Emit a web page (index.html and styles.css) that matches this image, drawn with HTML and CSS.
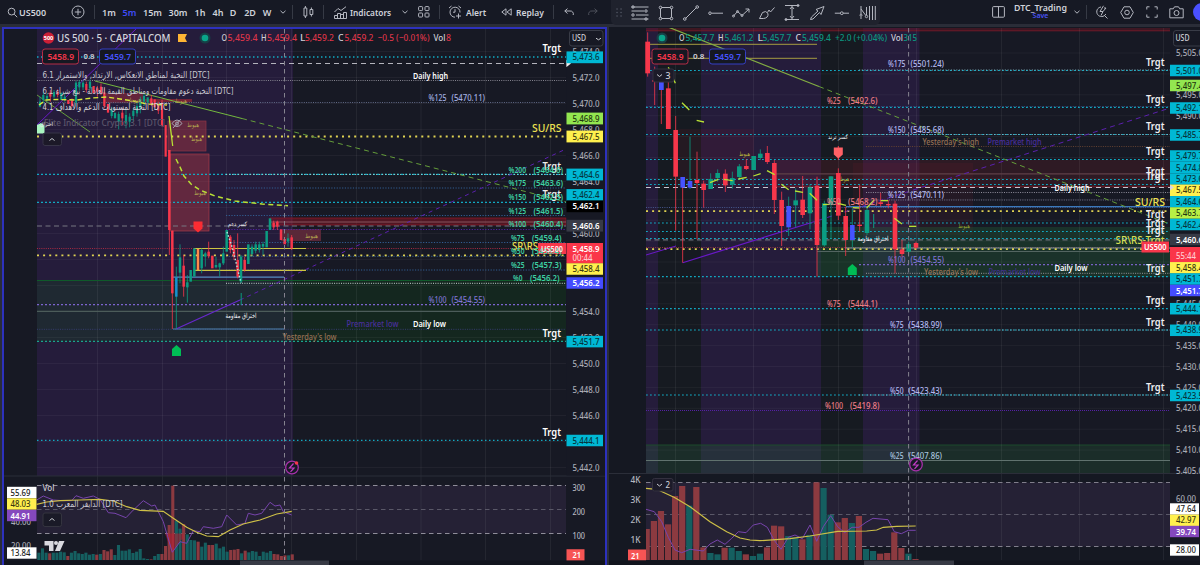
FILE: index.html
```
<!DOCTYPE html>
<html lang="en">
<head>
    <meta charset="UTF-8">
    <meta name="viewport" content="width=device-width, initial-scale=1.0">
    <title>US500</title>
    <link rel="stylesheet" href="styles.css">
</head>
<body>
    <header class="topbar">
        <div class="symbol">
            <svg width="11" height="11" viewBox="0 0 11 11"><circle cx="4.6" cy="4.6" r="3.4"/><path d="M7.2 7.2l3 3"/></svg>
            <b>US500</b>
        </div>
        <div class="cell add"><svg width="14" height="14" viewBox="0 0 14 14"><circle cx="7" cy="7" r="6"/><path d="M7 3.8v6.4M3.8 7h6.4"/></svg></div>
        <i class="sep"></i>
        <nav class="frames">
            <span class="w20">1m</span>
            <span class="w21 active">5m</span>
            <span class="w25">15m</span>
            <span class="w26">30m</span>
            <span class="w18">1h</span>
            <span class="w18">4h</span>
            <span class="w12">D</span>
            <span class="w22">2D</span>
            <span class="w12">W</span>
        </nav>
        <div class="cell w19"><svg width="6" height="4" viewBox="0 0 6 4"><path d="M.5.8L3 3.2 5.5.8"/></svg></div>
        <i class="sep"></i>
        <div class="cell w30"><svg width="11" height="14" viewBox="0 0 11 14"><path d="M1 3h2.8v8H1zM2.4 1v2M2.4 11v2M7 4.5h2.8v5H7zM8.4 2.5v2M8.4 9.5v2"/></svg></div>
        <i class="sep"></i>
        <div class="indicators">
            <svg width="13" height="13" viewBox="0 0 13 13"><path d="M.5 12.5v-3h3v3M3.5 12.5V7.5h3v5M6.5 12.5V8.5h3v4M9.5 12.5v-6h3v6H.5M.5 6l3.5-3.5 3 2L12 .7"/></svg>
            <b>Indicators</b>
        </div>
        <div class="cell w26"><svg width="6" height="4" viewBox="0 0 6 4"><path d="M.5.8L3 3.2 5.5.8"/></svg></div>
        <div class="cell w12"><svg width="12" height="12" viewBox="0 0 12 12"><rect x=".6" y=".6" width="4" height="4" rx=".8"/><rect x="7" y=".6" width="4" height="4" rx=".8"/><rect x=".6" y="7" width="4" height="4" rx=".8"/><rect x="7" y="7" width="4" height="4" rx=".8"/></svg></div>
        <i class="sep wide"></i>
        <div class="alert">
            <svg width="14" height="14" viewBox="0 0 14 14"><path d="M12 7.5A5 5 0 1 0 7 12.2M7 4.2v3H5M1 3l2.5-2M13 3l-2.5-2M10.5 8.5v5M8 11h5"/></svg>
            <b>Alert</b>
        </div>
        <div class="replay">
            <svg width="11" height="8" viewBox="0 0 11 8"><path d="M5 .8L.8 4 5 7.2zM10.2.8L6 4l4.2 3.2z"/></svg>
            <b>Replay</b>
        </div>
        <i class="sep"></i>
        <div class="cell w30"><svg width="10" height="8" viewBox="0 0 10 8"><path d="M3.5.6L.8 3l2.7 2.5M.8 3h5.2a3 3 0 0 1 3.2 4"/></svg></div>
        <div class="cell w18 off"><svg width="10" height="8" viewBox="0 0 10 8"><path d="M6.5.6L9.2 3 6.5 5.5M9.2 3H4A3 3 0 0 0 .8 7"/></svg></div>

        <div class="drawbar">
            <svg class="grip" width="6" height="9" viewBox="0 0 6 9"><path d="M1 1h.1M5 1h.1M1 4.5h.1M5 4.5h.1M1 8h.1M5 8h.1"/></svg>
            <svg width="18" height="16" viewBox="0 0 18 16"><path d="M.5 2h17M.5 6h12.5M5 10h12.5M.5 14h17"/><circle cx="2" cy="2" r="1.2"/><circle cx="15" cy="6" r="1.2"/><circle cx="2" cy="10" r="1.2"/><circle cx="15" cy="14" r="1.2"/></svg>
            <svg width="16" height="16" viewBox="0 0 16 16"><path d="M3.5 2.5h9M3.5 13.5h9M2.5 3.5v9M13.5 3.5v9"/><circle cx="2.5" cy="2.5" r="1.3"/><circle cx="13.5" cy="2.5" r="1.3"/><circle cx="2.5" cy="13.5" r="1.3"/><circle cx="13.5" cy="13.5" r="1.3"/></svg>
            <svg width="16" height="16" viewBox="0 0 16 16"><path d="M2.5 13.5l11-11"/><circle cx="1.8" cy="14" r="1.3"/><circle cx="14.2" cy="2" r="1.3"/></svg>
            <svg width="16" height="16" viewBox="0 0 16 16"><path d="M3.5 8.2H15"/><circle cx="2" cy="8.2" r="1.3"/></svg>
            <svg width="18" height="16" viewBox="0 0 18 16"><path d="M1.5 11L5.5 6.5 10 10.5 17 4M13.5 4H17v3.5"/><circle cx="1.5" cy="11" r="1"/><circle cx="5.5" cy="6.5" r="1"/><circle cx="10" cy="10.5" r="1"/></svg>
            <svg width="16" height="16" viewBox="0 0 16 16"><path d="M.5 13.5L3.5 7.5Q7 5 9 8.5 9.5 13 4.5 13.5zM8.5 7.5L10 5l1.5 2L15.5 2.500"/></svg>
            <svg width="16" height="17" viewBox="0 0 16 17"><path d="M1 1.5h14M1 15.5h14M8 2.5v12M6 5l2-2.5L10 5M6 12l2 2.5 2-2.5"/><circle cx="14" cy="1.5" r="1"/><circle cx="2" cy="15.5" r="1"/></svg>
            <svg width="16" height="16" viewBox="0 0 16 16"><path d="M1.5 14.5l1-2.500L9 6 7 4.500 15 1.500l-3 8L10.500 7.500 4 14z"/></svg>
            <svg width="16" height="16" viewBox="0 0 16 16"><path d="M.8 8.2h5.5M9.2 8.2H15"/><circle cx="7.8" cy="8.2" r="1.4"/></svg>
            <svg width="17" height="16" viewBox="0 0 17 16"><path d="M2 1v8M2 11.500V14M2 4l4.800 6.500M7.500 2v8M10.500 1v14M13.500 1v14M16.300 1v14"/><circle cx="2" cy="10.200" r="1"/><circle cx="7.500" cy="11.500" r="1.200"/></svg>
        </div>

        <div class="right-tools">
            <div class="cell w26"><svg width="13" height="12" viewBox="0 0 13 12"><rect x=".6" y=".6" width="11.8" height="10.6" rx="1"/><path d="M6.5.6v10.6"/></svg></div>
            <div class="layout-name"><strong>DTC_Trading</strong><small>Save</small></div>
            <div class="cell name-arrow"><svg width="6" height="4" viewBox="0 0 6 4"><path d="M.5.8L3 3.2 5.5.8"/></svg></div>
            <i class="sep"></i>
            <div class="cell w29"><svg width="13" height="14" viewBox="0 0 13 14"><path d="M6 2a4.800 4.800 0 1 0 4.800 7M9.500 10.500L12.500 13.500M8.500.8L5 6.500h3L6 10.500M8 6.500l3-3.500H9"/></svg></div>
            <div class="cell w21"><svg width="14" height="13" viewBox="0 0 14 13"><path d="M4 .8h6l3.300 5.700L10 12.200H4L.7 6.500z"/><circle cx="7" cy="6.500" r="2.300"/></svg></div>
            <div class="cell w29"><svg width="12" height="12" viewBox="0 0 12 12"><path d="M.8 3.500V.8h2.700M8.500.8h2.700v2.700M11.200 8.500v2.700H8.500M3.500 11.200H.8V8.500"/></svg></div>
            <div class="cell w21"><svg width="15" height="13" viewBox="0 0 15 13"><path d="M.8 2.800h3.500L5.500.8h4l1.200 2h3.500v9H.8z"/><circle cx="7.500" cy="7" r="2.500"/></svg></div>
            <span class="avatar"></span>
        </div>
    </header>

    <main class="panes">
        <section class="pane left">
            <svg id="chart5m" width="601" height="536" viewBox="4 29 601 536"></svg>
        </section>
        <section class="pane right">
            <svg id="chart1h" width="592" height="537" viewBox="608 28 592 537"></svg>
        </section>
    </main>

    <script src="script.js"></script>
</body>
</html>
```
FILE: styles.css
```
body {
    margin: 0;
    width: 1200px;
    height: 565px;
    overflow: hidden;
    background: #2a2d38;
    font-family: "Noto Sans", "Open Sans", "DejaVu Sans", sans-serif;
    font-size: 9px;
    color: #cfd2da;
}

svg {
    display: block;
    flex: none;
}

.topbar {
    position: relative;
    display: flex;
    align-items: center;
    height: 24px;
    background: #161924;
}

.topbar svg {
    fill: none;
    stroke: #b4b7c0;
    stroke-width: 1;
}

.topbar b {
    font-weight: 600;
}

.symbol, .indicators, .alert, .replay {
    box-sizing: border-box;
    display: flex;
    flex: none;
    align-items: center;
}

.symbol { width: 66px; padding-left: 7px; gap: 1px; }
.indicators { width: 68px; padding-left: 10px; gap: 3px; font-size: 8.3px; }
.alert { width: 48px; padding-left: 8px; gap: 4px; font-size: 8.5px; }
.replay { width: 65px; padding-left: 13px; gap: 4px; font-size: 8.5px; }

.cell, .frames span {
    display: flex;
    flex: none;
    justify-content: center;
    align-items: center;
}

.add { width: 24px; margin-right: 4px; }

.sep {
    flex: none;
    width: 1px;
    height: 14px;
    background: #363a45;
}

.frames {
    display: flex;
    margin-left: 4px;
    font-weight: 600;
}

.sep.wide { margin-left: 9px; }
.active { color: #3f4cf5; }
.off { opacity: .35; }

.w12 { width: 12px; }
.w18 { width: 18px; }
.w19 { width: 19px; }
.w20 { width: 20px; }
.w21 { width: 21px; }
.w22 { width: 22px; }
.w25 { width: 25px; }
.w26 { width: 26px; }
.w29 { width: 29px; }
.w30 { width: 30px; }

/* floating drawing toolbar */
.drawbar {
    position: absolute;
    left: 611px;
    top: 0;
    z-index: 2;
    width: 257px;
    height: 25px;
    padding: 0 4px 0 8px;
    display: flex;
    align-items: center;
    justify-content: space-between;
    background: #1f222d;
    border-radius: 0 0 5px 5px;
}

.drawbar .grip {
    margin-left: -3px;
    stroke: #555966;
    stroke-width: 1.4;
    stroke-linecap: round;
}

.right-tools {
    position: absolute;
    left: 985px;
    top: 0;
    width: 215px;
    height: 24px;
    overflow: hidden;
    display: flex;
    align-items: center;
}

.layout-name {
    display: flex;
    flex: none;
    flex-direction: column;
    align-items: center;
    width: 59px;
    line-height: 8px;
}

.layout-name strong { font-weight: 600; font-size: 8.8px; }
.layout-name small { font-size: 7px; color: #4853f5; font-weight: 600; }
.name-arrow { width: 14px; margin-right: 2px; }

.avatar {
    flex: none;
    width: 18px;
    height: 18px;
    margin-left: 6px;
    border-radius: 50%;
    background: #4a50ff;
}

.panes {
    display: flex;
    gap: 2px;
    padding-top: 3px;
}

.pane { background: #151822; }

.left {
    box-sizing: border-box;
    flex: none;
    width: 605px;
    height: 538px;
    border: solid #2d31bd;
    border-width: 2px 2px 0;
    margin-left: 2px;
    overflow: hidden;
}

.right {
    width: 591px;
    height: 538px;
    overflow: hidden;
    padding-top: 1px;
}

.right svg { margin-left: -1px; }
```
FILE: script.js
```
const NS = "http://www.w3.org/2000/svg";
let svg;

const RED = "#f7374b", GREEN = "#0b9c82", BLUE = "#4653ff";
const CYAN = "#12a9c2", YELLOW = "#e0d352", LIME = "#b9e235";

function add(tag, attrs, text) {
    const el = document.createElementNS(NS, tag);
    for (const k in attrs) el.setAttribute(k, attrs[k]);
    if (text) el.textContent = text;
    svg.appendChild(el);
    return el;
}

function box(x1, y1, x2, y2, fill, extra) {
    add("rect", { x: x1, y: y1, width: x2 - x1, height: y2 - y1, fill: fill, ...extra });
}

function line(x1, y1, x2, y2, stroke, dash, width) {
    const a = { x1, y1, x2, y2, stroke, "stroke-width": width || 1 };
    if (dash) a["stroke-dasharray"] = dash;
    add("line", a);
}

function poly(points, stroke, dash, width) {
    add("polyline", { points: points.join(" "), fill: "none", stroke: stroke, "stroke-width": width || 1, "stroke-dasharray": dash || "none" });
}

// x = left edge, y = vertical middle, w = drawn width
function label(x, y, w, text, fill, size, weight) {
    size = (size || 8) * 1.12;
    add("text", { x: x, y: y + size * 0.35, textLength: w, lengthAdjust: "spacingAndGlyphs", fill: fill, "font-size": size, "font-weight": weight || 500 }, text);
}

function arabic(x, y, w, text, fill, size) {
    add("text", { x: x, y: y + 3, direction: "rtl", "text-anchor": "end", textLength: w, lengthAdjust: "spacingAndGlyphs", fill: fill, "font-size": size || 9, "font-family": "DejaVu Sans, sans-serif" }, text);
}

function tag(x, y, w, h, text, bg, fill, tw) {
    box(x, y - h / 2, x + w, y + h / 2, bg);
    label(x + 6, y, tw || 27, text, fill, 8, fill === "#fff" ? 600 : 500);
}

// rows are [x, bodyTop, bodyBottom, colour, wickTop, wickBottom, wickColour] in thirds of a pixel
function candles(rows, ox, oy, w) {
    const c = { r: RED, g: GREEN, b: BLUE, o: "#ff8a4a", c: "#1792d0" };
    rows.forEach(([x, t, b, k, wt, wb, wk]) => {
        const cx = ox + x / 3;
        if (wt !== undefined) line(cx, oy + wt / 3, cx, oy + wb / 3, c[wk || k], null, 0.8);
        box(cx - w / 2, oy + t / 3, cx + w / 2, oy + b / 3, c[k]);
    });
}

function volume(rows, ox, step, w) {
    rows.forEach(([top, k], i) => {
        const x = ox + i * step;
        box(x, 450 + top / 3, x + w, 560, k === "r" ? "#8c3a40" : "#155f60");
    });
}

function curve(pts, ox, oy) {
    return pts.map(([x, y]) => (ox + x / 3).toFixed(1) + "," + (oy + y / 3).toFixed(1));
}

function quote(x, y, text, colour) {
    box(x, y, x + 36, y + 15, "#151822", { rx: 2.5, stroke: colour });
    label(x + 5, y + 7.7, 26.5, text, colour === "#343fc4" ? "#4653ff" : RED, 8, 600);
}

function bolt(x, y) {
    add("circle", { cx: x, cy: y, r: 6.3, fill: "#171925", stroke: "#a530a8", "stroke-width": 1.3 });
    add("path", { d: `M${x + 1.5} ${y - 4}l-4 4.5h4.5l-3.5 3.8`, fill: "none", stroke: "#c13cc5", "stroke-width": 1.2 });
}

function chevron(x, y, dir) {
    add("path", { d: `M${x - 2.5} ${y + dir}l2.5 ${-2 * dir}l2.5 ${2 * dir}`, fill: "none", stroke: "#c8cad0" });
}

function pin(x, y, fill, dir) {
    add("path", { d: `M${x - 4.5} ${y - 5 * dir}h9v${7 * dir}l-4.5 ${4 * dir}l-4.5 ${-4 * dir}z`, fill: fill });
}

/* ---------- left chart ---------- */
svg = document.getElementById("chart5m");

box(4, 29, 606, 565, "#171924");
box(37, 29, 293, 476, "#251c3b");
box(37, 280.5, 293, 341.5, "#1f2932");
box(293, 280.5, 566, 341.5, "#14271f");
box(4, 476, 606, 565, "#171924");
box(37, 485.5, 566, 533.5, "#252135");
for (let y = 51.5; y < 470; y += 26) line(37, y, 566, y, "rgba(255,255,255,.045)");
[97.5, 162.5, 226.5, 291.5, 356.5, 421, 485.5, 550.5].forEach(x => line(x, 29, x, 560, "rgba(255,255,255,.06)"));
line(4, 476, 605, 476, "#2b2e39");
line(37, 280.5, 566, 280.5, "#0f5a2a");

box(105, 93, 143, 103, "rgba(195,50,60,.4)");
box(145, 99, 192, 102, "rgba(195,40,50,.5)");
box(168, 121, 206, 151, "rgba(190,60,70,.4)", { stroke: "#8f3545", "stroke-width": .7 });
box(170, 154, 209, 231, "rgba(190,60,70,.4)", { stroke: "#a93a48", "stroke-width": .7 });
box(270, 218, 566, 225, "rgba(150,20,35,.45)", { stroke: "#8c1824", "stroke-width": .8 });
line(270, 222, 566, 222, "#85525c");
box(281, 229, 321, 241, "#592838");

line(37, 57, 566, 57, CYAN, "1.5 2.5", 1.3);
line(37, 63.5, 566, 63.5, "#b4b4bd", "5 4");
add("path", { d: "M566.5 60l4.5 3.5l-4.5 3.5z", fill: "#eee" });
line(37, 80.5, 566, 80.5, "#85848f", "1 1.2", 1.2);
line(37, 102.5, 566, 102.5, "#626b88", "1 1.3", 1.2);
line(37, 136.5, 566, 136.5, YELLOW, "2 4.1", 1.8);
line(37, 174.4, 566, 174.4, CYAN, "2 2", 1.2);
line(226, 174.4, 566, 174.4, "#8fd5d2", "1.2 1.8", 1);
[188, 215.5, 242.5, 256.3, 270].forEach(y => line(226, y, 566, y, "#315d91", "1.2 1.5"));
line(37, 202.3, 566, 202.3, CYAN, "2 2", 1.2);
line(37, 226, 566, 226, "#777681", "5 3.5", 1.2);
line(226, 229.5, 566, 229.5, "#5224a0", "1.2 1.5");
line(37, 248.5, 566, 248.5, "#a62b42", "1 1.2");
line(37, 255.3, 566, 255.3, YELLOW, "2 4.1", 1.8);
line(226, 283.3, 566, 283.3, "#a4b1ae", "1 1.3", 1.2);
line(37, 304.7, 566, 304.7, "#7c64cf", "2 2", 1.3);
line(37, 311.3, 566, 311.3, "#4c5c5a", null, 1.2);
line(37, 329.3, 566, 329.3, "#363d70", "1 1.3");
line(37, 341.3, 566, 341.3, "#1aa48d", "2 2", 1.2);
line(37, 440.3, 566, 440.3, CYAN, "1.5 2.5", 1.3);
[485.5, 509.5, 533.5].forEach((y, i) => line(37, y, 566, y, i === 1 ? "#5a5868" : "#8f8d99", "4.5 3.5"));
line(173, 277.2, 284, 277.2, "#568bc2", null, 1.2);
line(173, 329, 284, 329, "#4f82af", null, 1.2);

// trend lines
line(95, 81, 242, 118.5, "#73b83e");
line(242, 118.5, 566, 202, "#659e3a", "5 4");
line(37, 95, 90, 132, "#659e3a");
line(37, 125, 137, 28, "#6918c8");
line(176, 329, 240, 300, "#6728cc", null, 1.3);
line(240, 300, 566, 149, "#5b20ae", "4 4");
line(194, 248.5, 306, 248.5, "#cdc542", null, 1.2);
line(194, 270.3, 306, 270.3, "#cdc542", null, 1.2);

candles([
    [120,305,320,"g",290,322],[130,285,300,"g",275,310],[141,288,296,"g",280,305],[151,278,290,"r",270,305],[162,276,290,"g",270,296],[173,275,285,"r",268,292],
    [184,278,300,"g"],[194,290,298,"g",280,305],[205,300,312,"r"],[216,302,318,"r",295,322],[228,248,308,"g",243,320],[238,246,262,"g",240,272],[249,248,262,"g",241,270],
    [259,252,270,"r",245,278],[270,245,265,"g",238,272],[281,258,280,"r"],[292,265,275,"r",258,290],[303,260,280,"r",250,285],[313,277,318,"r",265,325],[324,312,338,"r"],
    [335,328,348,"g",320,355],[345,338,355,"g"],[356,342,365,"g",335,388],[367,338,355,"r",325,375],[378,345,370,"g",330,385],[389,350,365,"g",340,382],[400,332,348,"g",325,365],
    [411,318,340,"g",308,350],[421,297,325,"g",290,340],[432,288,305,"g",280,318],[443,292,308,"g"],[454,295,312,"r",285,318],[464,298,322,"r"],[475,312,332,"r",305,342],[486,308,378,"r",300,380],[497,375,470,"r"]
], 0, 0, 2.2);
candles([
    [508,0,240,"r",0,315],[517,242,430,"r",242,537],[529,382,440,"c",350,537,"g"],[540,322,368,"g",283,400],[551,347,410,"r",315,440],[562,397,412,"g",375,458],[572,360,395,"g"],[583,295,380,"g"],
    [594,297,360,"o"],[605,300,355,"g",295,370],[616,310,320,"g",305,350],[626,305,318,"r",275,325],[637,317,355,"r"],[648,345,352,"g",320,355],[659,340,352,"g",338,380],[670,310,340,"g",290,345],[680,240,305,"g"],
    [691,260,300,"r",255,310],[702,285,320,"r",270,330],[713,330,380,"r",250,385],[723,320,395,"g",315,400],[734,330,360,"r",320,365],[745,283,342,"g"],[756,290,312,"g",283,320],[767,283,302,"g",275,310],
    [778,283,300,"g",275,308],[789,282,290,"g",275,315],[800,243,292,"g"],[810,205,240,"g"],[821,218,232,"r",212,240],[832,215,230,"r",212,240],[843,238,270,"r"],[854,267,283,"r"],[864,265,275,"g",250,290],[875,262,295,"r",255,300]
], 0, 150, 2.5);
line(241.2, 293, 241.2, 305, GREEN);
poly(["227,232", "233,250", "241,283"], "#b5ebe0", "1.5 2", 1.4);
poly(["39,105", "46,100", "57,99.5", "77,100", "92,98", "107,97", "120,99", "133,101", "147,104", "167,105"], "#d7e83c", "5 3", 1.4);
line(169, 116, 172.7, 146, LIME, null, 1.3);
poly(["176,159", "180,167", "184,176", "191,184", "200,190", "215,196", "235,201", "262,204", "288,205.7"], LIME, "5 3.5", 1.5);

volume([[308,"g"],[295,"g"],[308,"g"],[310,"r"],[308,"g"],[308,"g"],[305,"g"],[307,"g"],[318,"r"],[308,"g"],[303,"g"],[310,"g"],[312,"g"],[308,"g"],[314,"g"],[312,"g"],[314,"r"],[312,"g"],
    [300,"r"],[304,"r"],[298,"r"],[315,"g"],[285,"g"],[302,"g"],[302,"g"],[298,"g"],[309,"g"],[305,"g"],[297,"g"],[325,"g"],[327,"g"],[328,"r"],[318,"g"],[312,"g"],[312,"r"],[288,"r"],[225,"r"],[107,"r"],
    [213,"g"],[236,"g"],[222,"r"],[253,"g"],[270,"g"],[271,"g"],[275,"r"],[290,"g"],[278,"g"],[285,"r"],[285,"r"],[281,"g"],[295,"g"],[290,"g"],[305,"g"],[300,"r"],[299,"r"],[297,"r"],[310,"g"],
    [302,"r"],[307,"g"],[303,"g"],[305,"g"],[318,"g"],[305,"g"],[308,"g"],[303,"g"],[312,"r"],[313,"r"],[318,"r"],[316,"r"],[316,"g"],[313,"r"]], 37.3, 3.62, 3.1);
add("path", { d: "M165 533.5L172 553l8-12 3.5-2.5V533.5z", fill: "rgba(190,30,50,.55)" });
poly(curve([[110,150],[130,138],[160,150],[190,152],[215,152],[228,137],[250,145],[280,138],[300,148],[325,188],[345,190],[378,203],[400,180],[430,152],[455,168],[465,165],[490,215],[503,260],[517,307],[540,275],[560,280],[580,242],[600,245],[610,230],[640,235],[665,230],[680,195],[710,225],[735,220],[745,190],[765,195],[785,190],[810,157],[825,168],[840,165],[850,185],[875,195]], 0, 450), "#7744ac");
poly(curve([[110,163],[140,156],[180,152],[240,150],[300,148],[340,153],[380,170],[420,181],[490,184],[520,205],[560,232],[590,247],[620,258],[655,260],[690,240],[730,222],[780,210],[830,192],[875,184]], 0, 450), "#cec047", null, 1.2);
line(284.5, 29, 284.5, 560, "#85838f", "4.5 3.5");

// legend
add("circle", { cx: 48.5, cy: 38, r: 5.8, fill: "#cc1f36" });
label(43.7, 38, 9.6, "500", "#fff", 4.8, 700);
label(57, 37.8, 113.5, "US 500 · 5 · CAPITALCOM", "#d4d5dc", 9.6, 500);
add("path", { d: "M178 34h9l-2 4l2 4h-9z", fill: "#ffb534" });
add("circle", { cx: 205, cy: 38, r: 5.5, fill: "#173f46" });
add("circle", { cx: 205, cy: 38, r: 3.3, fill: "#0aa58a" });
[["O", 221.5, "5,459.4", 227.5, 30], ["H", 261, "5,459.4", 267, 30], ["L", 300, "5,459.2", 305, 29], ["C", 338, "5,459.2", 344.5, 29]].forEach(([k, x, v, vx, w]) => {
    label(x, 38, 5.5, k, "#cfd0d8", 8);
    label(vx, 38, w, v, "#dc3549", 8);
});
label(377.5, 38, 52, "−0.5 (−0.01%)", "#dc3549", 8);
label(433.5, 38, 12, "Vol", "#cfd0d8", 8);
label(446, 38, 5, "8", "#dc3549", 8);
quote(42.5, 49, "5458.9", "#b62d46");
quote(99.5, 49, "5459.7", "#343fc4");
label(83.5, 56.5, 11, "0.8", "#d0d0d8", 7, 600);
arabic(42.5, 75, 167, "[DTC] النخبة لمناطق الانعكاس, الارتداد, والاستمرار 6.1", "#c9c8d1");
arabic(42.5, 91, 191, "[DTC] النخبة دعوم مقاومات ومناطق القيمة العادلة - بيع شراء 6.1", "#c9c8d1");
arabic(42.5, 107, 128, "[DTC] النخبة لمستويات الدعم والاهداف 4.1", "#d5d4db");
label(44, 123, 121, "Elite Indicator Crypto 3.1 [DTC]", "#5c566b", 8);
add("path", { d: "M172 123.5q5-7 10 0q-5 6-10 0zM173 128l8-9", fill: "none", stroke: "#aaa6b4" });
add("circle", { cx: 177, cy: 123.5, r: 1.5, fill: "none", stroke: "#aaa6b4" });
add("path", { d: "M37 125l4-2l3.5 3v7.5h-7.5z", fill: "#a9f5c0" });
arabic(40, 123, 13, "اختراق", "#eee", 5.5);
box(43, 133, 61.5, 145.5, "#1c1928", { rx: 2, stroke: "#373447" });
chevron(52, 139.5, 1);

// notes drawn on the price area
[[129, 98.5, 12], [175, 99.5, 12], [187, 123.5, 12], [191, 138, 11], [194, 192, 12], [305, 235, 13]].forEach(([x, y, w]) => arabic(x, y, w, "هبوط", "#b4a74f", 6));
arabic(228, 223, 19, "كسر دعم", "#f0f0f4", 6);
arabic(225.5, 315, 31, "اختراق مقاومة", "#f0f0f4", 7);
pin(198, 226.5, "#fb2c32", 1);
pin(176.5, 351, "#00bd55", -1);
[[48.5, "#fff"], [166, "#eee"], [194.5, "#eee"], [333, "#fff"], [432, "#fff"]].forEach(([y, c]) => label(542.5, y, 18.5, "Trgt", c, 9.2, 600));
label(413, 76, 35, "Daily high", "#fff", 8, 600);
label(413, 324, 33, "Daily low", "#fff", 8, 600);
label(346.5, 324, 52, "Premarket low", "#4a2f9d", 8);
label(282.5, 337, 54, "Yesterday's low", "#967154", 8);
label(428.5, 98, 18, "%125", "#a3afe0", 8);
label(451.5, 98, 33.5, "(5470.11)", "#a3afe0", 8);
label(428.5, 300, 18, "%100", "#7f73d3", 8);
label(451.5, 300, 33.5, "(5454.55)", "#7f73d3", 8);
label(532, 128, 29.5, "SU/RS", "#eee252", 9.5, 500);
label(512, 246.5, 26, "SR\\RS", "#eee252", 9.5, 500);
box(538, 243, 566, 254, "#f7374b");
[["%200", 169.5, 508.5, "(5464.6)", 533.5], ["%175", 183, 508.5, "(5463.6)", 533.5], ["%150", 196.8, 508.5, "(5462.5)", 533.5], ["%125", 210.4, 508.5, "(5461.5)", 533.5], ["%100", 224, 508.5, "(5460.4)", 533.5],
    ["%75", 237.5, 511, "(5459.4)", 532], ["%50", 251, 511, "(5458.4)", 532], ["%25", 265, 511, "(5457.3)", 532], ["%0", 278, 513, "(5456.2)", 530]].forEach(([a, y, x, b, bx]) => {
    label(x, y, a.length > 3 ? 17.5 : a.length > 2 ? 13.5 : 9.5, a, "#3ecfa2", 8, 600);
    label(bx, y, 29.5, b, "#3ecfa2", 8, 600);
});
label(541, 248.5, 22, "US500", "#ffe9ec", 8, 600);
bolt(292, 467.5);
add("circle", { cx: 296.5, cy: 463, r: 1.8, fill: "#f7374b" });

// price scale
box(566.5, 29, 605, 475.5, "#171924");
[5474, 5472, 5470, 5468, 5466, 5464, 5460, 5454, 5452, 5450, 5448, 5446, 5442].forEach(p => {
    label(572.5, 77.5 + (5472 - p) * 13, 27, p.toLocaleString("en-US") + ".0", "#a9abb5", 8);
});
add("path", { d: "M566.5 60l4.5 3.5l-4.5 3.5z", fill: "#eee" });
box(569.5, 30.5, 603, 46, "#171924", { rx: 2.5, stroke: "#393c47" });
label(572, 38.5, 14, "USD", "#d2d4da", 7.5);
chevron(598.5, 39, -.8);
[[57.3, "5,473.6", "#00b8d4", "#06343c"], [118.5, "5,468.9", "#93e650", "#22360f"], [136.5, "5,467.5", "#fff04e", "#3a370f"], [174.5, "5,464.6", "#00b8d4", "#06343c"], [195, "5,462.4", "#00b8d4", "#06343c"],
    [206.3, "5,462.1", "#000", "#fff"], [225.7, "5,460.6", "#373a46", "#fff"]].forEach(([y, t, bg, c]) => tag(566.5, y, 36.5, 11.8, t, bg, c));
box(566.5, 243, 603, 263.5, "#fa3549");
label(572.5, 248.5, 27, "5,458.9", "#fff", 8, 600);
label(572.5, 257.5, 20, "00:44", "#ffc9cf", 8);
[[269, "5,458.4", "#fff04e", "#3a370f"], [283, "5,456.2", "#454cff", "#fff"], [341.6, "5,451.7", "#00b8d4", "#06343c"], [440.5, "5,444.1", "#00b8d4", "#06343c"]].forEach(([y, t, bg, c]) => tag(566.5, y, 36.5, 11.5, t, bg, c));
[["300", 487.5], ["200", 511.5], ["100", 535.5]].forEach(([t, y]) => label(572.5, y, 12.5, t, "#b5b7c0", 8));
tag(566.5, 555, 18, 11.5, "21", "#f75454", "#fff", 8.5);

// indicator pane legend and its left scale
label(42.5, 487.5, 12, "Vol", "#c9cad2", 8);
arabic(42.5, 503.5, 80, "[DTC] الدايفر المعرب 1.0", "#c9c8d1");
box(43, 513, 61.5, 526.5, "#1a1a27", { rx: 2, stroke: "#34343f" });
chevron(52, 519.5, 1);
add("path", { d: "M44.500 541h9v10h-4.500v-5.500h-4.500zM59 541h5.500l-4.500 10h-5z", fill: "#d9dae0" });
add("circle", { cx: 56, cy: 543, r: 2, fill: "#d9dae0" });
label(11, 521.5, 20, "40.00", "#a9abb5", 8);
label(11, 545.5, 20, "20.00", "#a9abb5", 8);
[[492.5, "55.69", "#fff", "#222"], [504, "48.03", "#fff04e", "#3a370f"], [515.5, "44.91", "#8548bd", "#fff"], [553, "13.84", "#fff", "#222"]].forEach(([y, t, bg, c]) => {
    box(7, y - 5.7, 36.5, y + 5.7, bg);
    label(10.5, y, 20, t, c, 8, c === "#fff" ? 600 : 500);
});
box(4, 560.5, 606, 565, "#11141d");
box(240, 560.5, 329, 565, "#373a45");

/* ---------- right chart ---------- */
svg = document.getElementById("chart1h");

box(608, 28, 1200, 565, "#151822");
box(646, 28, 1170, 473, "#171924");
box(646, 28, 658, 473, "#251c3b");
box(658, 28, 701, 473, "#161a21");
box(701, 28, 821, 473, "#251c3b");
box(821, 28, 863, 473, "#161a21");
box(863, 28, 919.5, 473, "#251c3b");
box(646, 28, 1170, 31, "rgba(120,20,35,.4)");
line(646, 30.8, 1170, 30.8, "#6d1a28");
box(676, 129, 754, 187, "rgba(120,30,40,.15)");
box(775, 160, 1170, 187, "rgba(140,30,40,.2)");
box(853, 163, 973, 235, "rgba(120,30,45,.13)");
box(817, 227, 1170, 277, "rgba(32,110,55,.3)");
box(646, 445, 1170, 473, "#1b2d29");
[[646, 658], [701, 821], [863, 919.5]].forEach(([a, b]) => box(a, 445, b, 473, "#26303b"));
line(646, 445, 1170, 445, "#1d4a2d");
box(646, 482.5, 1170, 546.5, "#252135");
for (let y = 53; y < 470; y += 20.9) line(646, y, 1170, y, "rgba(255,255,255,.045)");
[675.5, 753.5, 838.5, 916.5, 1001.5, 1079.5, 1163.5].forEach(x => line(x, 28, x, 560, "rgba(255,255,255,.06)"));
line(608, 473.5, 1200, 473.5, "#2b2e39");

[70.5, 107.3, 134.5, 159.5, 179.5, 184.5, 223, 231.5, 238.5, 276.7, 308.7, 330, 395].forEach(y => line(646, y, 1170, y, CYAN, "1.8 2.2", 1.2));
[70, 134.5, 330, 395].forEach(y => line(859, y, 1170, y, "#8bbecb", "1.2 1.5", .8));
line(646, 106.5, 1170, 106.5, "#3a4f87", "1.2 1.5", .8);
line(866, 146.5, 1170, 146.5, "#644231", "1 1.3");
line(775, 173.8, 1170, 173.8, "#5f4149", null, 1.2);
line(775, 186.8, 1170, 186.8, "#76222d");
line(646, 187.5, 1170, 187.5, "#c7c5ce", "5 4");
line(866, 192.5, 1170, 192.5, "#8f8d9b", "1 1.3");
line(866, 200, 1170, 200, "#73728b", "1 1.3");
line(646, 207.5, 1170, 207.5, "#46588e", "1 1.3");
line(846, 206.7, 1170, 206.7, "#3b79bb", null, 1.2);
line(646, 211.2, 1170, 211.2, YELLOW, "2 4.1", 1.8);
line(646, 239.8, 1170, 239.8, "#6d6e78", "5 3.5", 1.2);
line(646, 247.5, 1170, 247.5, "#963245", "1 1.3");
line(845, 248, 1170, 248, "#7d99a2", null, 1.2);
line(646, 249.2, 1170, 249.2, YELLOW, "2 4.1", 1.8);
line(817, 251.5, 1170, 251.5, "#536561");
line(859, 264.7, 1170, 264.7, "#7761c4", "2 2", 1.2);
line(866, 273.3, 1170, 273.3, "#9a969c", "1 1.3");
line(646, 410.5, 1170, 410.5, "#5420a5", "1 1", 1);
line(646, 460.5, 1170, 460.5, "#60726e", null, 1.2);
[482.5, 514.5, 546.5].forEach((y, i) => line(646, y, 1170, y, i === 1 ? "#5a5868" : "#807e8b", "4.5 3.5"));
line(646, 44.3, 817, 44.3, "#a69d42");
line(646, 58.3, 817, 58.3, "#a69d42");
line(668, 27, 819, 86.5, "#83ae42", null, 1.2);
line(819, 86.5, 1167, 223, "#659e3a", "5 4");
line(646, 255, 676, 246, "#6918c8");
line(682.7, 262.7, 810, 223, "#6918c8", null, 1.2);
line(810, 223, 1170, 108, "#5b20ae", "5 4");

candles([[143,125,220,"r",97,230],[164,240,245,"r",200,315],[184,245,270,"b",245,372,"r"],[205,265,387,"r",245,387]], 600, 0, 4.8);
candles([
    [107,-30,110,"r",-72,272],[128,111,143,"b",111,368,"r"],[150,123,143,"b",-10,147,"g"],[171,120,129,"r",35,298],[191,131,150,"r",122,203],[212,117,147,"g",100,147],[233,99,114,"g",88,125],[256,101,136,"r",88,156],
    [277,114,134,"g",95,146],[298,79,111,"g",72,115],[319,78,87,"r",57,90],[341,48,90,"g"],[361,41,54,"g",28,60],[382,39,66,"r",18,72],[403,69,180,"r",60,222],[425,180,258,"r",155,318],[446,198,262,"b",170,288,"g"],
    [467,181,196,"g",145,262],[488,179,225,"r",108,234],[510,142,220,"g",133,268],[531,137,315,"r",110,410],[553,190,316,"g",182,320],[573,109,195,"g",108,298],[595,99,227,"r",85,240],[617,228,300,"r",200,348],
    [637,255,300,"b",205,322,"g"],[659,254,258,"r",135,275],[681,210,279,"g",200,285],[722,187,192,"r",158,200],[745,192,196,"r",180,205],[765,191,328,"r",182,400],[786,328,342,"r",300,352],[806,312,335,"g",305,340],[828,309,323,"r",305,328]
], 640, 140, 4.6);
line(873.7, 214, 873.7, 228, GREEN);
// moving stop, one dash every other bar
[[85,-218,106,-170],[126,-112,148,-90],[170,-59,192,-54],[210,128,235,118],[252,118,278,122],[295,117,320,112],[340,108,362,101],[381,92,404,104],[424,133,446,149],[465,153,489,157],[509,160,531,181],[549,194,568,193],[594,190,618,196],[638,203,658,204],[680,204,702,180],[722,182,744,182],[763,235,786,252],[807,259,829,259]].forEach(([a, b, c, d]) => {
    line(640 + a / 3, 140 + b / 3, 640 + c / 3, 140 + d / 3, LIME, null, 1.3);
});
volume([[237,"r"]], 646, 0, 3.8);
volume([[213,"r"],[183,"r"],[223,"r"],[138,"r"],[108,"r"],[167,"g"],[111,"r"],[292,"r"],[309,"g"],[313,"g"],[293,"r"],[293,"g"],[303,"g"],[313,"r"],[318,"g"],[311,"g"],[292,"r"],[227,"r"],[229,"r"],[258,"g"],[262,"g"],[268,"r"],[255,"g"],
    [97,"r"],[114,"g"],[194,"g"],[217,"r"],[204,"r"],[219,"g"],[198,"r"],[297,"g"],[303,"g"],[311,"r"],[309,"r"],[247,"r"],[294,"r"],[311,"g"],[327,"r"]], 650.8, 7.07, 6.2);
poly(curve([[108,178],[133,185],[155,215],[175,262],[195,300],[215,308],[240,298],[280,303],[300,282],[322,270],[345,283],[365,265],[385,245],[408,248],[430,225],[452,220],[472,232],[492,270],[513,298],[535,262],[555,255],[577,266],[600,225],[620,274],[640,230],[662,197],[683,230],[704,248],[726,232],[747,232],[768,217],[789,205],[834,209],[853,245],[874,251],[895,241],[917,241]], 610, 450), "#7744ac");
poly(curve([[108,115],[140,118],[195,143],[240,170],[300,215],[350,245],[390,264],[420,270],[450,272],[540,266],[600,258],[683,244],[770,243],[800,240],[820,232],[860,229],[917,228]], 610, 450), "#cec047", null, 1.2);
line(908.6, 28, 908.6, 560, "#85838f", "4.5 3.5");

add("circle", { cx: 662, cy: 38, r: 5.5, fill: "#173f46" });
add("circle", { cx: 662, cy: 38, r: 3.3, fill: "#0aa58a" });
[["O", 679, "5,457.7", 685.5, 29], ["H", 718, "5,461.2", 724.5, 29], ["L", 757.5, "5,457.7", 762.5, 29], ["C", 795.5, "5,459.4", 802, 29]].forEach(([k, x, v, vx, w]) => {
    label(x, 38, 5.5, k, "#cfd0d8", 8);
    label(vx, 38, w, v, "#0c9680", 8);
});
label(835, 38, 52, "+2.0 (+0.04%)", "#0c9680", 8);
label(891, 38, 12, "Vol", "#cfd0d8", 8);
label(903.5, 38, 13.5, "315", "#0c9680", 8);
quote(652, 49, "5458.9", "#b62d46");
quote(709.5, 49, "5459.7", "#343fc4");
label(693, 56.5, 11.5, "0.8", "#d0d0d8", 7, 600);
box(653, 69, 674, 82, "#1c1b29", { rx: 2, stroke: "#33313f" });
chevron(659.5, 75.5, -1);
label(665.5, 75.5, 5, "3", "#cfd0d8", 8);

const violet = "#b3b9ef";
[["%175", 888, "(5501.24)", 910.5, 64, violet], ["%150", 888, "(5485.68)", 910.5, 129.5, violet], ["%125", 888, "(5470.11)", 910.5, 195, violet], ["%100", 888, "(5454.55)", 910.5, 260, "#7f73d3"],
    ["%75", 890, "(5438.99)", 908.5, 325, violet], ["%50", 890, "(5423.43)", 908.5, 390.5, violet], ["%25", 890, "(5407.86)", 908.5, 456, "#a9c3dd"]].forEach(([a, x, b, bx, y, c]) => {
    label(x, y, a.length > 3 ? 17.5 : 13.5, a, c, 8);
    label(bx, y, 33.5, b, c, 8);
});
[["%25", 827, "(5492.6)", 848, 100.5], ["%50", 827, "(5468.2)", 848, 202], ["%75", 827, "(5444.1)", 848, 304], ["%100", 825, "(5419.8)", 850, 406]].forEach(([a, x, b, bx, y]) => {
    label(x, y, a.length > 3 ? 18 : 13.5, a, "#ee7e86", 8);
    label(bx, y, 29.5, b, "#ee7e86", 8);
});
label(922.5, 141.5, 56.5, "Yesterday's high", "#967154", 8);
label(987.5, 141.5, 54, "Premarket high", "#4a2f9d", 8);
label(924, 272, 54, "Yesterday's low", "#967154", 8);
label(988.5, 272, 52, "Premarket low", "#43308f", 8);
label(1054.5, 187.5, 35, "Daily high", "#fff", 8, 600);
label(1054.5, 268, 33, "Daily low", "#fff", 8, 600);
arabic(739, 153, 11, "هبوط", "#bdbd3c", 6);
arabic(840, 178, 9, "هبوط", "#bdbd3c", 6);
arabic(958, 225, 12, "هبوط", "#8fa32f", 6);
arabic(828, 136, 20, "كسر ترند", "#f0f0f4", 6);
arabic(857.5, 237.5, 31, "اختراق مقاومة", "#f0f0f4", 7);
line(838.3, 146, 838.3, 160, RED);
pin(838.3, 152.5, "#ff6166", 1);
pin(852.3, 270, "#00bd55", -1);
label(1135, 202, 30, "SU/RS", "#eee252", 9.5, 500);
label(1115.5, 240, 49, "SR\\RS-Trgt", "#d6df55", 9.5, 500);
[62, 99, 126, 151.5, 171, 176, 214, 223, 230, 268, 300, 322, 387].forEach(y => label(1146, y, 18.5, "Trgt", "#f0f0f2", 9.2, 600));
box(1141.5, 241.5, 1169, 252.5, "#f7374b");
label(1144, 247.2, 22.5, "US500", "#fff", 8, 600);
bolt(916, 464.5);

box(1170, 31, 1200, 473, "#171924");
[5505, 5495, 5490, 5445, 5440, 5435, 5430, 5425, 5420, 5415, 5410, 5405].forEach(p => {
    label(1176, 53 + (5505 - p) * 4.18, 27, p.toLocaleString("en-US") + ".0", "#a9abb5", 8);
});
box(1170, 474, 1200, 565, "#171924");
box(1173.5, 30.5, 1206, 46, "#171924", { rx: 2.5, stroke: "#393c47" });
label(1175.5, 38.5, 14, "USD", "#d2d4da", 7.5);

function priceTag(y, t, k) {
    const bg = { c: "#00b8d4", g: "#93e650", l: "#b8ef45", y: "#fff04e", d: "#373a46", b: "#454cff" }[k];
    const fg = { c: "#06343c", g: "#22360f", l: "#22360f", y: "#3a370f", d: "#fff", b: "#fff" }[k];
    tag(1170, y, 30, 11.5, t, bg, fg);
}

[[70.5, "5,501.0", "c"], [85.5, "5,497.4", "g"], [108, "5,492.1", "c"], [135, "5,485.7", "c"], [156, "5,479.7", "c"], [167.5, "5,474.8", "c"], [179, "5,473.6", "c"], [190.3, "5,467.5", "y"], [201.8, "5,464.6", "c"],
    [213, "5,463.7", "l"], [224.5, "5,462.4", "c"], [239.5, "5,460.6", "d"]].forEach(([y, t, k]) => priceTag(y, t, k));
box(1170, 247, 1200, 262.5, "#fa3549");
label(1176, 256.3, 20, "55:44", "#ffc9cf", 8);
[[267.8, "5,458.4", "y"], [279, "5,451.7", "c"], [290.5, "5,451.7", "b"], [308.7, "5,444.1", "c"], [330.3, "5,438.9", "c"], [395.5, "5,423.5", "c"]].forEach(([y, t, k]) => priceTag(y, t, k));
add("path", { d: "M1170 184.5l4 3l-4 3z", fill: "#d5d5dc" });

[["4K", 480], ["3K", 499.5], ["2K", 519.5], ["1K", 539.5]].forEach(([t, y]) => label(630.5, y, 10, t, "#b5b7c0", 8));
box(628, 549.5, 646, 560.5, "#f75454");
label(631, 555.5, 8.5, "21", "#fff", 8, 600);
box(652.5, 478.5, 673, 491, "#1c1b29", { rx: 2, stroke: "#33313f" });
chevron(659.5, 485, -1);
label(665.5, 485, 4.5, "2", "#cfd0d8", 8);
label(1176, 498.5, 20, "60.00", "#a9abb5", 8);
[[509, "47.64", "#fff", "#222"], [520.3, "42.97", "#fff04e", "#3a370f"], [531.5, "39.74", "#8548bd", "#fff"], [550, "28.00", "#fff", "#222"]].forEach(([y, t, bg, c]) => {
    box(1170, y - 5.7, 1199, y + 5.7, bg);
    label(1176, y, 20, t, c, 8, c === "#fff" ? 600 : 500);
});
box(608, 560.5, 1200, 565, "#11141d");
box(864, 560.5, 954, 565, "#373a45");
```
